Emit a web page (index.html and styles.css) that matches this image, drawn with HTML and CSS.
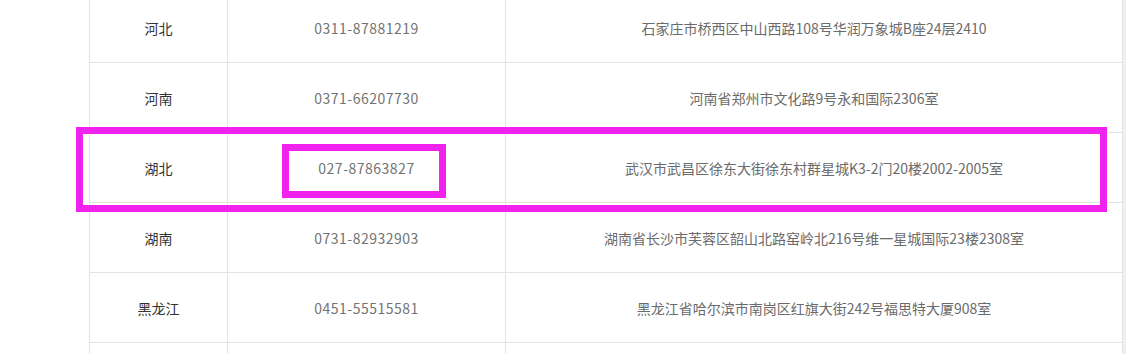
FILE: index.html
```html
<!DOCTYPE html>
<html lang="zh-CN">
<head>
<meta charset="utf-8">
<title>联系方式</title>
<link rel="stylesheet" href="styles.css">
</head>
<body>
<div class="page">
  <div class="table">
    <div class="row"><div class="cell prov">河北</div><div class="cell tel">0311-87881219</div><div class="cell addr">石家庄市桥西区中山西路108号华润万象城B座24层2410</div></div>
    <div class="row"><div class="cell prov">河南</div><div class="cell tel">0371-66207730</div><div class="cell addr">河南省郑州市文化路9号永和国际2306室</div></div>
    <div class="row"><div class="cell prov">湖北</div><div class="cell tel">027-87863827</div><div class="cell addr">武汉市武昌区徐东大街徐东村群星城K3-2门20楼2002-2005室</div></div>
    <div class="row"><div class="cell prov">湖南</div><div class="cell tel">0731-82932903</div><div class="cell addr">湖南省长沙市芙蓉区韶山北路窑岭北216号维一星城国际23楼2308室</div></div>
    <div class="row"><div class="cell prov">黑龙江</div><div class="cell tel">0451-55515581</div><div class="cell addr">黑龙江省哈尔滨市南岗区红旗大街242号福思特大厦908室</div></div>
    <div class="row"><div class="cell prov"></div><div class="cell tel"></div><div class="cell addr"></div></div>
  </div>
</div>
<div class="mark mark-row"></div>
<div class="mark mark-tel"></div>
</body>
</html>
```
FILE: styles.css
```css
html, body {
  margin: 0;
  padding: 0;
}
body {
  background: #efefef;
  width: 1126px;
  height: 354px;
  overflow: hidden;
  position: relative;
  font-family: "Noto Sans CJK SC", "Noto Sans", sans-serif;
  font-size: 14px;
}
.page {
  width: 1123px;
  height: 354px;
  background: #fff;
  padding-left: 89px;
  box-sizing: border-box;
  overflow: hidden;
}
.table {
  margin-top: -7px;
  display: flex;
  flex-direction: column;
}
.row {
  display: grid;
  grid-template-columns: 138px 278px 618px;
  height: 70px;
  flex: none;
}
.cell {
  display: flex;
  align-items: center;
  justify-content: center;
  border-left: 1px solid #e3e3e3;
  border-bottom: 1px solid #e3e3e3;
  box-sizing: border-box;
  white-space: nowrap;
}
.cell.addr {
  border-right: 1px solid #e3e3e3;
  color: #6b6b6b;
}
.prov {
  color: #333;
}
.tel {
  color: #737373;
  letter-spacing: 0.5px;
}
.mark {
  position: absolute;
  border: 7px solid #f222ee;
  box-sizing: border-box;
}
.mark-row {
  left: 76px;
  top: 127px;
  width: 1031px;
  height: 85px;
}
.mark-tel {
  left: 282px;
  top: 144px;
  width: 164px;
  height: 54px;
}
```
